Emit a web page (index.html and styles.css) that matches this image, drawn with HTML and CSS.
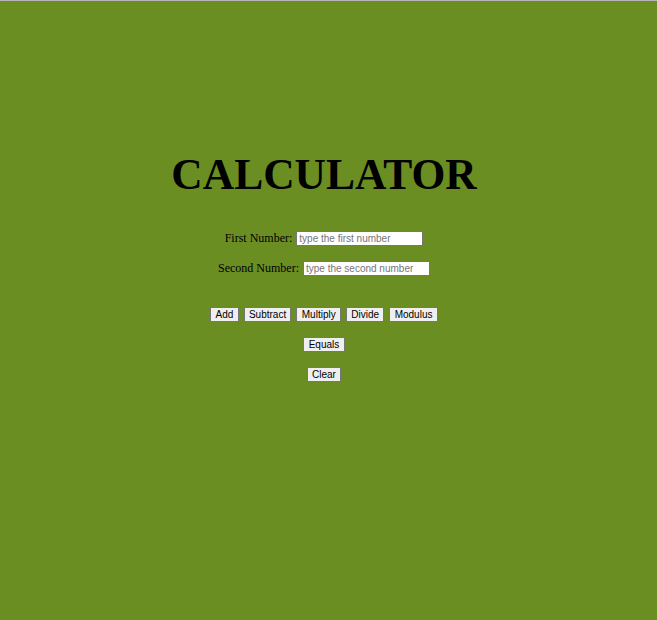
FILE: index.html
```html
<!DOCTYPE html>
<html lang="en">
<head>
<meta charset="utf-8">
<title>Calculator</title>
<link rel="stylesheet" href="styles.css">
</head>
<body>
<div class="page">
  <h1 class="title">CALCULATOR</h1>
  <div class="row row-first">
    <label class="label" for="n1">First Number:</label>
    <input class="field" id="n1" type="text" placeholder="type the first number">
  </div>
  <div class="row">
    <label class="label" for="n2">Second Number:</label>
    <input class="field" id="n2" type="text" placeholder="type the second number">
  </div>
  <div class="row row-ops">
    <button class="btn">Add</button>
    <button class="btn">Subtract</button>
    <button class="btn">Multiply</button>
    <button class="btn">Divide</button>
    <button class="btn">Modulus</button>
  </div>
  <div class="row">
    <button class="btn">Equals</button>
  </div>
  <div class="row">
    <button class="btn">Clear</button>
  </div>
</div>
</body>
</html>
```

FILE: styles.css
```css
html, body {
  margin: 0;
  padding: 0;
}
body {
  background: #6b8e23;
  border-top: 1px solid #b5b5b5;
  min-height: 619px;
  font-family: "Liberation Serif", "Times New Roman", serif;
  color: #000;
}
.page {
  width: 648px;
  padding-top: 148px;
  display: flex;
  flex-direction: column;
  align-items: center;
  gap: 15px;
}
.title {
  margin: 0;
  font-size: 43.5px;
  line-height: 50px;
  font-weight: bold;
}
.row {
  display: flex;
  align-items: baseline;
  justify-content: center;
  gap: 4px;
}
.row-first {
  margin-top: 17px;
}
.row-ops {
  margin-top: 16px;
  gap: 5px;
}
.label {
  font-size: 12px;
}
.field {
  box-sizing: border-box;
  width: 127px;
  height: 15px;
  margin: 0;
  padding: 0 2px;
  border: 1px solid #767676;
  background: #fff;
  font-family: "Liberation Sans", Arial, sans-serif;
  font-size: 10px;
  line-height: 13px;
  color: #000;
}
.field::placeholder {
  color: #757575;
}
.btn {
  box-sizing: border-box;
  height: 15px;
  margin: 0;
  padding: 0 4.3px;
  border: 1px solid #767676;
  border-radius: 0;
  background: #efefef;
  font-family: "Liberation Sans", Arial, sans-serif;
  font-size: 10px;
  line-height: 13px;
  color: #000;
}
```
